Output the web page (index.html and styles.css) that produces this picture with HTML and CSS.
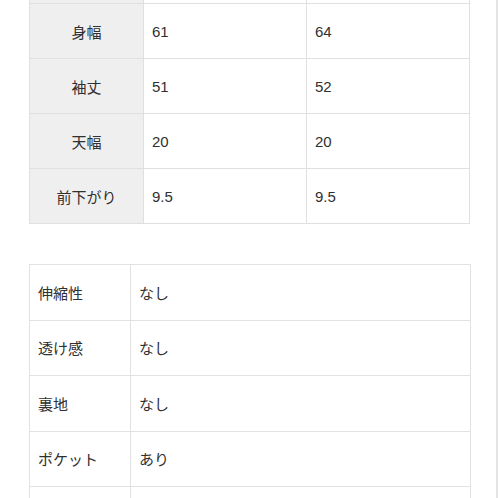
FILE: index.html
```html
<!DOCTYPE html>
<html lang="ja">
<head>
<meta charset="utf-8">
<title>サイズ表</title>
<link rel="stylesheet" href="styles.css">
</head>
<body>
<div class="page">
  <table class="size-table">
    <colgroup>
      <col class="c-head">
      <col class="c-val">
      <col class="c-val">
    </colgroup>
    <tbody>
      <tr class="cut-row"><th></th><td></td><td></td></tr>
      <tr><th>身幅</th><td>61</td><td>64</td></tr>
      <tr><th>袖丈</th><td>51</td><td>52</td></tr>
      <tr><th>天幅</th><td>20</td><td>20</td></tr>
      <tr><th>前下がり</th><td>9.5</td><td>9.5</td></tr>
    </tbody>
  </table>

  <table class="spec-table">
    <colgroup>
      <col class="s-head">
      <col class="s-val">
    </colgroup>
    <tbody>
      <tr><th>伸縮性</th><td>なし</td></tr>
      <tr><th>透け感</th><td>なし</td></tr>
      <tr><th>裏地</th><td>なし</td></tr>
      <tr><th>ポケット</th><td>あり</td></tr>
      <tr><th></th><td></td></tr>
    </tbody>
  </table>
</div>
</body>
</html>
```

FILE: styles.css
```css
html, body {
  margin: 0;
  padding: 0;
  background: #ffffff;
}

body {
  width: 498px;
  height: 498px;
  overflow: hidden;
  font-family: "Liberation Sans", "Noto Sans CJK JP", sans-serif;
  font-size: 15px;
  color: #303030;
}

.page {
  width: 498px;
  height: 498px;
  border-right: 2px solid #e4e4e4;
  padding-left: 29px;
  box-sizing: border-box;
  overflow: hidden;
}

table {
  border-collapse: collapse;
  table-layout: fixed;
}

.size-table {
  width: 441px;
  margin-top: -51px;
}

.c-head { width: 114px; }
.c-val { width: 163px; }

.size-table tr {
  height: 55px;
}

.size-table tr.cut-row {
  height: 54px;
}

.size-table th,
.size-table td {
  border: 1px solid #e0e0e0;
  padding: 0 0 0 8px;
  vertical-align: middle;
  font-weight: normal;
}

.size-table th {
  background: #efefef;
  text-align: center;
  padding: 0;
}

.size-table td {
  text-align: left;
  background: #ffffff;
}

.spec-table {
  width: 441px;
  margin-top: 40px;
}

.s-head { width: 101px; }
.s-val { width: 340px; }

.spec-table tr {
  height: 55.5px;
}

.spec-table th,
.spec-table td {
  border: 1px solid #e2e2e2;
  padding: 0 0 0 8px;
  text-align: left;
  font-weight: normal;
  vertical-align: middle;
  background: #ffffff;
}
```
